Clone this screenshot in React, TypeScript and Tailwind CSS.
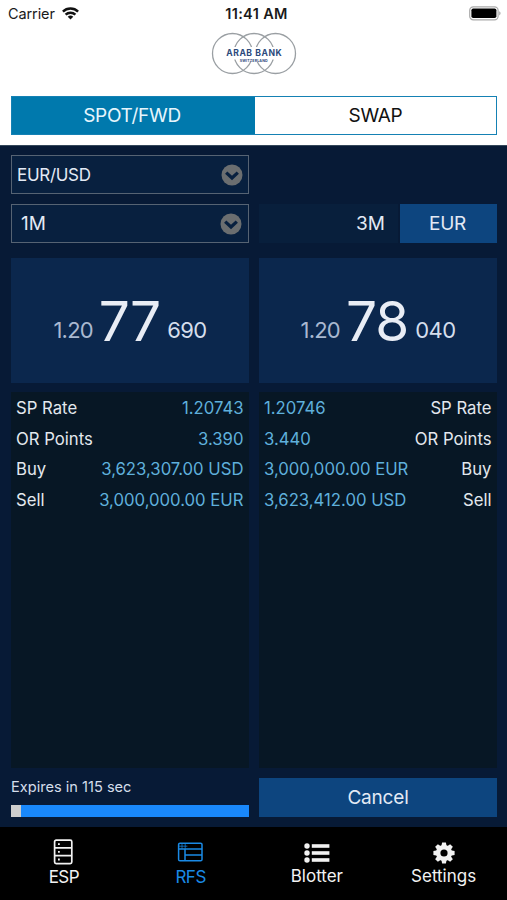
import type { ReactNode } from 'react'
import clsx from 'clsx'

type Detail = { label: string; value: string }

const bidDetails: Detail[] = [
  { label: 'SP Rate', value: '1.20743' },
  { label: 'OR Points', value: '3.390' },
  { label: 'Buy', value: '3,623,307.00 USD' },
  { label: 'Sell', value: '3,000,000.00 EUR' },
]

const askDetails: Detail[] = [
  { label: 'SP Rate', value: '1.20746' },
  { label: 'OR Points', value: '3.440' },
  { label: 'Buy', value: '3,000,000.00 EUR' },
  { label: 'Sell', value: '3,623,412.00 USD' },
]

function WifiIcon() {
  return (
    <svg width="17" height="13" viewBox="0 0 17 13" fill="none" stroke="#111" strokeWidth="2.4">
      <path d="M0.9 4.6a10.8 10.8 0 0 1 15.2 0" />
      <path d="M3.6 7.7a7 7 0 0 1 9.8 0" />
      <path d="M8.5 12.6 5.7 9.8a4 4 0 0 1 5.6 0Z" fill="#111" stroke="none" />
    </svg>
  )
}

function BatteryIcon() {
  return (
    <svg width="32" height="15" viewBox="0 0 32 15">
      <rect x="0.7" y="0.8" width="28.4" height="13" rx="3.6" fill="#fff" stroke="#aaa" strokeWidth="1.2" />
      <rect x="2.4" y="2.5" width="25" height="9.6" rx="1.8" fill="#000" />
      <path d="M30.3 5.2c1.6.6 1.6 3.6 0 4.2Z" fill="#999" />
    </svg>
  )
}

function Logo() {
  return (
    <svg width="86" height="43" viewBox="0 0 86 43" fill="none" stroke="#9a9fa3" strokeWidth="1.3">
      <circle cx="21.5" cy="21.5" r="20" />
      <circle cx="43" cy="21.5" r="20" />
      <circle cx="64.5" cy="21.5" r="20" />
      <rect x="13" y="15" width="60" height="12.5" fill="#fff" stroke="none" />
      <rect x="27" y="25" width="31" height="5" fill="#fff" stroke="none" />
      <text x="15.2" y="24.3" fontSize="8.6" fontWeight="700" textLength="55.5" fill="#2c4a7c" stroke="none">
        ARAB BANK
      </text>
      <text x="28.7" y="30.2" fontSize="3.6" fontWeight="700" textLength="28" fill="#2c4a7c" stroke="none">
        SWITZERLAND
      </text>
    </svg>
  )
}

function ChevronCircle() {
  return (
    <svg width="22" height="22" viewBox="0 0 22 22">
      <circle cx="11" cy="11" r="10.5" fill="#6b6e70" />
      <path d="M5.2 8.6 11 14l5.8-5.4" fill="none" stroke="#08203f" strokeWidth="3.3" />
    </svg>
  )
}

function ServerIcon() {
  return (
    <svg width="20" height="26" viewBox="0 0 20 26" fill="none" stroke="currentColor" strokeWidth="1.7">
      <rect x="1.6" y="1.2" width="17.2" height="23.4" rx="1.6" />
      <path d="M1.6 8.9h17.2M1.6 16.7h17.2" />
      <path d="M5 5.2h1.8M5 12.9h1.8M5 20.5h1.8" strokeWidth="1.8" />
    </svg>
  )
}

function TableIcon() {
  return (
    <svg width="26" height="21" viewBox="0 0 26 21" fill="none" stroke="currentColor" strokeWidth="1.5">
      <rect x="1.6" y="1.2" width="23.4" height="17.6" rx="1.4" />
      <path d="M1.6 6.9H25M8 6.9v11.9M8 12.9h17" />
      <path d="M1.6 4.2h8.8M5 1.2v5.7M8.2 1.2v5.7" strokeWidth="0.7" />
    </svg>
  )
}

function ListIcon() {
  return (
    <svg width="26" height="20" viewBox="0 0 26 20" fill="currentColor">
      <circle cx="3" cy="3" r="2.7" />
      <circle cx="3" cy="10" r="2.7" />
      <circle cx="3" cy="17" r="2.7" />
      <rect x="7.8" y="1.2" width="17.6" height="3.6" />
      <rect x="7.8" y="8.2" width="17.6" height="3.6" />
      <rect x="7.8" y="15.2" width="17.6" height="3.6" />
    </svg>
  )
}

function GearIcon() {
  return (
    <svg width="22" height="22" viewBox="0 0 22 22" fill="currentColor">
      {[0, 45, 90, 135].map((angle) => (
        <path key={angle} d="M9.1.4h3.8l.8 4v13.2l-.8 4H9.1l-.8-4V4.4Z" transform={`rotate(${angle} 11 11)`} />
      ))}
      <circle cx="11" cy="11" r="8" />
      <circle cx="11" cy="11" r="3.6" fill="#000" />
    </svg>
  )
}

function PriceTile({ big, mid, small }: { big: string; mid: string; small: string }) {
  return (
    <button className="flex h-[125px] items-baseline justify-center bg-[#0b274d] pt-[31px] leading-[64px]">
      <span className="text-[22px] tracking-[-0.8px] text-[#a9b8d0] -translate-y-[3px]">{big}</span>
      <span className="ml-[6px] text-[55px] tracking-[-1px] text-[#e9edf5]">{mid}</span>
      <span className="ml-[7px] text-[22px] tracking-[-0.6px] text-[#d5deec] -translate-y-[3px]">{small}</span>
    </button>
  )
}

function DetailPanel({ details, reverse }: { details: Detail[]; reverse?: boolean }) {
  return (
    <div className="h-[376px] bg-[#071725] pt-[1.5px] pr-[5.5px] pl-[5px] text-[16.7px]">
      {details.map(({ label, value }) => (
        <div
          key={label}
          className={clsx('flex h-[30.5px] items-center justify-between', reverse && 'flex-row-reverse')}
        >
          <span className="text-[#e3e8ee]">{label}</span>
          <span className="text-[#5fb0dc]">{value}</span>
        </div>
      ))}
    </div>
  )
}

type NavItemProps = { icon: ReactNode; label: string; active?: boolean; caps?: boolean }

function NavItem({ icon, label, active, caps }: NavItemProps) {
  return (
    <button className={clsx('flex flex-col items-center', active ? 'text-[#1a8ae5]' : 'text-[#f2f2f2]')}>
      <span className={clsx('flex items-end', caps ? 'h-[38px]' : 'h-[37px]')}>{icon}</span>
      <span className={clsx('text-[17px]', caps ? 'pl-px leading-[25px] tracking-[-0.5px]' : 'leading-[24px]')}>
        {label}
      </span>
    </button>
  )
}

export default function App() {
  return (
    <div className="flex h-[900px] w-[507px] flex-col overflow-hidden bg-[#071a36] font-['Inter','Liberation_Sans',sans-serif]">
      <header className="h-[145px] bg-white">
        <div className="grid h-7 grid-cols-3 items-center pr-[6px] pl-[8px] text-[14.5px] text-[#1a1a1a]">
          <div className="flex items-center gap-[7px]">
            <span className="tracking-[-0.1px]">Carrier</span>
            <span className="-mt-[2px]">
              <WifiIcon />
            </span>
          </div>
          <div className="pl-[4px] text-center font-semibold tracking-[0.35px] whitespace-nowrap">11:41 AM</div>
          <div className="-mt-[2px] flex justify-end">
            <BatteryIcon />
          </div>
        </div>
        <div className="flex h-[68px] justify-center pt-1">
          <Logo />
        </div>
        <div className="mr-[10px] ml-[11px] grid h-[39px] grid-cols-[243px_1fr] border border-[#1581b4] text-[19px] tracking-[-0.3px]">
          <button className="bg-[#0079ad] pt-[2px] pr-[3px] text-[#e6f5fc]">SPOT/FWD</button>
          <button className="pt-[2px] text-[#111]">SWAP</button>
        </div>
      </header>

      <main className="h-[682px] border-t border-[#34475a] pt-[9px] pr-[10px] pl-[11px]">
        <div className="grid grid-cols-[238px_238px] gap-x-[10px] gap-y-[10px]">
          <button className="flex h-[39px] items-center justify-between border border-[#566373] bg-[#08203f] pr-[5px] pl-[5px] text-[17px] tracking-[-0.3px] text-[#e3eaf5]">
            <span className="pt-[2px]">EUR/USD</span>
            <ChevronCircle />
          </button>
          <div />
          <button className="flex h-[39px] items-center justify-between border border-[#566373] bg-[#08203f] pr-[6px] pl-[9px] text-[19px] text-[#e3eaf5]">
            <span className="pt-px">1M</span>
            <ChevronCircle />
          </button>
          <div className="flex gap-[2px] text-[19px] text-[#e3eaf5]">
            <div className="flex flex-1 items-center justify-end bg-[#081f3c] pt-px pr-[13px]">3M</div>
            <button className="w-[97px] bg-[#0d457f] pt-px pr-[2px] tracking-[-0.3px]">EUR</button>
          </div>
        </div>

        <div className="mt-[15px] grid grid-cols-[238px_238px] gap-x-[10px] gap-y-[9px]">
          <PriceTile big="1.20" mid="77" small="690" />
          <PriceTile big="1.20" mid="78" small="040" />
          <DetailPanel details={bidDetails} />
          <DetailPanel details={askDetails} reverse />
        </div>

        <div className="mt-[10px] grid h-[39px] grid-cols-[238px_238px] gap-x-[10px]">
          <div className="flex flex-col justify-between">
            <span className="text-[14.6px] leading-[19px] text-[#d5deeb]">Expires in 115 sec</span>
            <div className="flex h-[12px] bg-[#1988fb]">
              <div className="w-[10px] bg-[#cdcdcd]" />
            </div>
          </div>
          <button className="bg-[#0d457f] pt-[2px] text-[19px] tracking-[-0.2px] text-[#e3eaf5]">Cancel</button>
        </div>
      </main>

      <nav className="grid h-[73px] grid-cols-4 items-start bg-black">
        <NavItem icon={<ServerIcon />} label="ESP" caps />
        <NavItem
          icon={
            <span className="pb-[2px]">
              <TableIcon />
            </span>
          }
          label="RFS"
          active
          caps
        />
        <NavItem
          icon={
            <span className="pb-px">
              <ListIcon />
            </span>
          }
          label="Blotter"
        />
        <NavItem icon={<GearIcon />} label="Settings" />
      </nav>
    </div>
  )
}
